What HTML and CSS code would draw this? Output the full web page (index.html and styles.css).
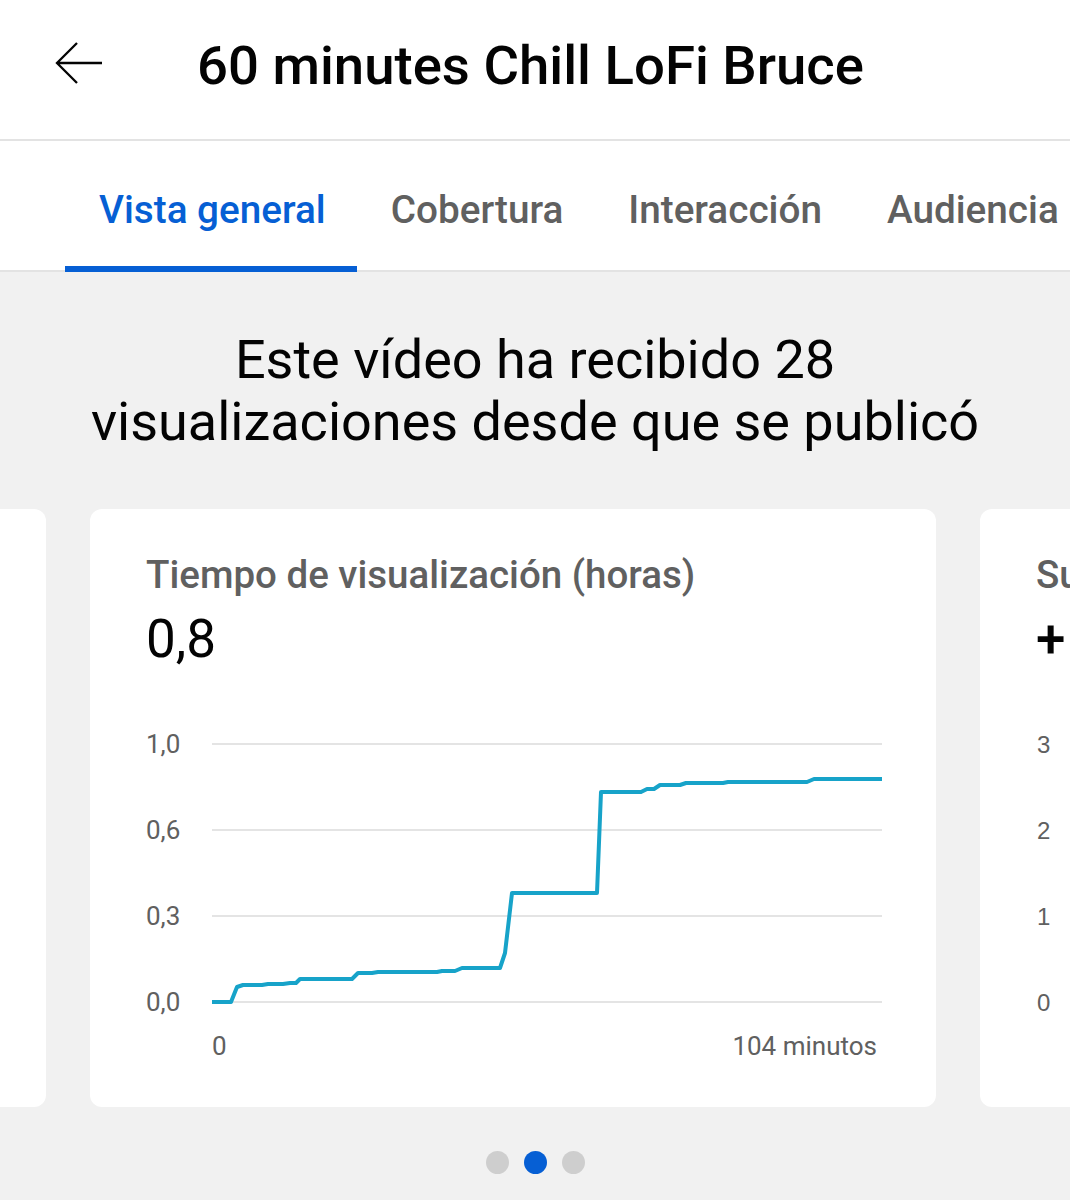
FILE: index.html
```html
<!DOCTYPE html>
<html lang="es">
<head>
<meta charset="utf-8">
<title>60 minutes Chill LoFi Bruce</title>
<link rel="stylesheet" href="styles.css">
</head>
<body>
<header class="topbar">
  <svg class="back" width="48" height="44" viewBox="0 0 48 44" aria-hidden="true">
    <path d="M47 22 H2 M22 2 L2 22 L22 42" fill="none" stroke="#030303" stroke-width="2.3" stroke-linejoin="miter"/>
  </svg>
  <h1 class="title">60 minutes Chill LoFi Bruce</h1>
</header>
<nav class="tabs">
  <div class="tab active">Vista general</div>
  <div class="tab">Cobertura</div>
  <div class="tab">Interacción</div>
  <div class="tab">Audiencia</div>
</nav>
<main class="content">
  <h2 class="summary">Este vídeo ha recibido 28<br>visualizaciones desde que se publicó</h2>
  <div class="carousel">
    <section class="card"></section>
    <section class="card">
      <div class="card-title">Tiempo de visualización (horas)</div>
      <div class="card-value">0,8</div>
      <svg class="chart" width="736" height="340" viewBox="0 0 736 340">
        <g stroke="#e4e4e4" stroke-width="2">
          <line x1="66" y1="19" x2="736" y2="19"/>
          <line x1="66" y1="105" x2="736" y2="105"/>
          <line x1="66" y1="191" x2="736" y2="191"/>
          <line x1="66" y1="277" x2="736" y2="277"/>
        </g>
        <g class="axis">
          <text x="0" y="28">1,0</text>
          <text x="0" y="114">0,6</text>
          <text x="0" y="200">0,3</text>
          <text x="0" y="286">0,0</text>
          <text x="66" y="330">0</text>
          <text x="731" y="330" text-anchor="end">104 minutos</text>
        </g>
        <polyline fill="none" stroke="#17a3c9" stroke-width="4" stroke-linejoin="round"
          points="66,277 85,277 91,262 97,260 116,260 122,259 137,259 144,258 150,258 154,254 206,254 212,248 226,248 232,247 291,247 296,246 309,246 316,243 354,243 359,228 366,168 451,168 455,67 495,67 501,64 508,64 514,60 534,60 540,58 577,58 582,57 661,57 668,54 736,54"/>
      </svg>
    </section>
    <section class="card">
      <div class="card-title">Su</div>
      <div class="card-value plus">+</div>
      <svg class="chart" width="736" height="340" viewBox="0 0 736 340">
        <g class="axis alt">
          <text x="1" y="28">3</text>
          <text x="1" y="114">2</text>
          <text x="1" y="200">1</text>
          <text x="1" y="286">0</text>
        </g>
      </svg>
    </section>
  </div>
  <div class="dots">
    <span class="dot"></span>
    <span class="dot on"></span>
    <span class="dot"></span>
  </div>
</main>
</body>
</html>
```
FILE: styles.css
```css
* { box-sizing: border-box; }
html, body {
  margin: 0;
  padding: 0;
  width: 1070px;
  height: 1200px;
  overflow: hidden;
  background: #f1f1f1;
  font-family: Roboto, "Noto Sans", Arial, sans-serif;
  color: #030303;
}
.topbar {
  height: 141px;
  background: #fff;
  border-bottom: 2px solid #e3e3e3;
  display: flex;
  align-items: center;
  padding: 0 0 10px 55px;
}
.back { display: block; flex: none; margin-bottom: 4px; }
.title {
  margin: 0 0 0 94px;
  font-size: 54.5px;
  font-weight: 500;
  line-height: 62px;
  color: #030303;
  white-space: nowrap;
}
.tabs {
  height: 131px;
  background: #fff;
  border-bottom: 2px solid #e3e3e3;
  display: flex;
  padding-left: 65px;
}
.tab {
  display: flex;
  align-items: center;
  padding: 8px 32px 0 33px;
  font-size: 38.7px;
  font-weight: 500;
  color: #606060;
  white-space: nowrap;
}
.tab.active {
  color: #065fd4;
  border-bottom: 6px solid #065fd4;
  margin-bottom: -2px;
  padding: 12px 31px 0 34px;
  margin-right: 1px;
}
.content {
  background: #f1f1f1;
}
.summary {
  margin: 0;
  padding-top: 57px;
  font-size: 54px;
  font-weight: 400;
  line-height: 62px;
  text-align: center;
  color: #030303;
  white-space: nowrap;
}
.carousel {
  display: flex;
  gap: 44px;
  margin-top: 56px;
  margin-left: -800px;
}
.card {
  flex: none;
  width: 846px;
  height: 598px;
  background: #fff;
  border-radius: 12px;
  padding: 43px 0 0 56px;
}
.card-title {
  font-size: 38.5px;
  font-weight: 500;
  line-height: 46px;
  color: #606060;
  white-space: nowrap;
}
.card-value {
  font-size: 53px;
  font-weight: 400;
  line-height: 62px;
  margin-top: 10px;
  color: #030303;
}
.card-value.plus { font-weight: 500; }
.chart {
  display: block;
  margin-top: 55px;
  overflow: visible;
}
.axis text {
  font-family: Roboto, "Noto Sans", sans-serif;
  font-size: 26px;
  fill: #606060;
}
.axis.alt text {
  font-family: "Liberation Sans", Arial, sans-serif;
  font-size: 24px;
}
.dots {
  display: flex;
  justify-content: center;
  gap: 15px;
  margin-top: 44px;
}
.dot {
  width: 23px;
  height: 23px;
  border-radius: 50%;
  background: #cecece;
}
.dot.on { background: #065fd4; }
```
